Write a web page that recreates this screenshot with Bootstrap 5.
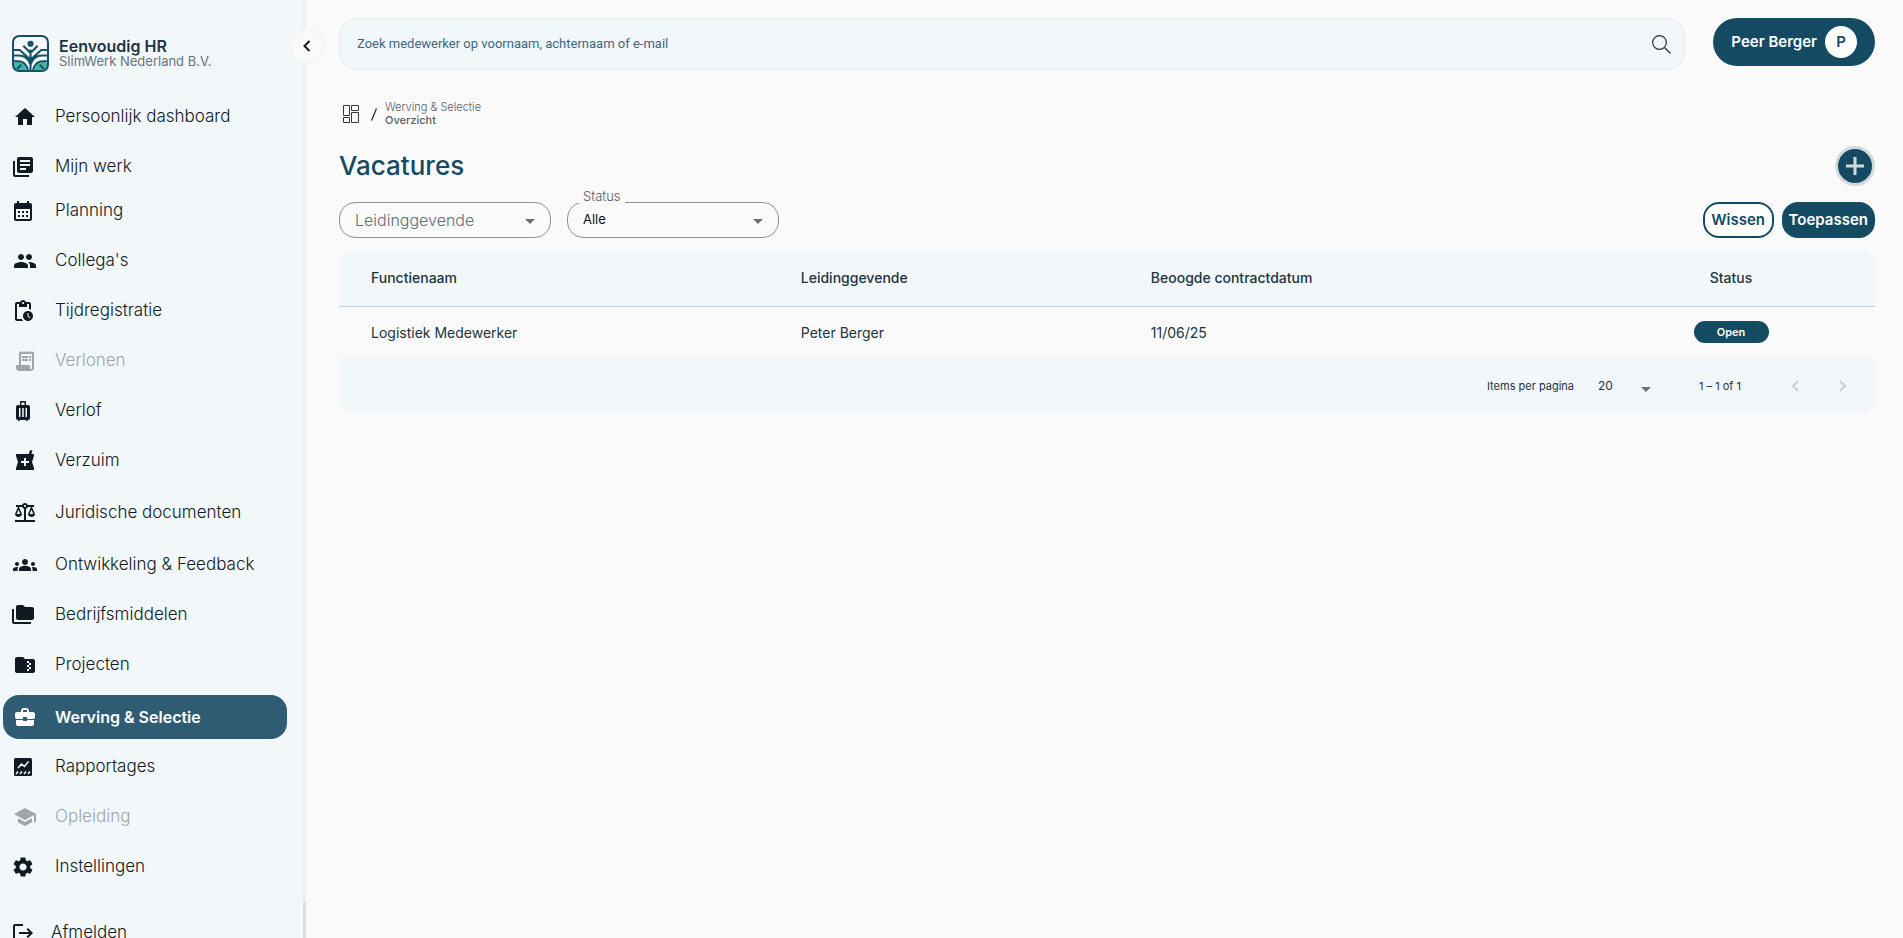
<!DOCTYPE html>
<html lang="nl">
<head>
<meta charset="utf-8">
<meta name="viewport" content="width=device-width, initial-scale=1">
<title>Vacatures – Eenvoudig HR</title>
<link href="https://cdn.jsdelivr.net/npm/bootstrap@5.3.0/dist/css/bootstrap.min.css" rel="stylesheet">
<style>
:root { --brand: #144b63; --soft: #f2f7fa; --ink: #16212a; }
body { background: #fafafa; color: var(--ink); font-family: Inter, sans-serif; }
a { color: inherit; text-decoration: none; }

/* sidebar */
.app-side { width: 306px; background: var(--soft); }
.side-body { height: 100vh; overflow: hidden; }
.side-track { width: 3px; background: #eceef0; }
.side-thumb { height: 36px; background: #d8dfe4; }
.side-head { height: 95px; padding: 35px 12px 0; gap: 10px; }
.side-head svg { width: 37px; height: 37px; }
.side-names { padding-top: 3px; }
.side-title { font-size: 16px; font-weight: 600; line-height: 16px; color: #22333f; }
.side-org { font-size: 13px; font-weight: 400; line-height: 14px; color: #69737b; }
.side-toggle { left: 290px; top: 29px; width: 34px; height: 34px; background: #fafafa; border: 1px solid #edf0f2; z-index: 2; }
.side-link { height: 44px; margin: 0 16px 6px 3px; padding-left: 8px; border-radius: 16px; font-size: 17px; font-weight: 350; color: #101a22; }
.side-link.tight { margin-bottom: 0; }
.side-link.wide { margin-bottom: 8px; }
.side-link.active { background: #2f5c73; color: #fff; font-size: 16px; font-weight: 600; }
.side-link.disabled { color: #9fa5aa; }
.side-link svg { display: block; width: 24px; height: 24px; fill: currentColor; }
.side-icon { width: 44px; }
.side-icon.inset { padding-left: 2px; }
.side-link.logout { margin-top: 22px; }
.side-link.logout .side-icon { width: 40px; }

/* top bar */
.app-main { padding: 18px 28px 0 33px; }
.search-box { height: 52px; background: var(--soft); border: 2px solid #edf1f5; border-radius: 17px; padding: 0 12px 0 16px; }
.search-box input { font: 13px Roboto, sans-serif; line-height: 16px; color: #3d6880; }
.search-box input::placeholder { color: #3d6880; opacity: 1; }
.user-btn { height: 48px; margin-left: 28px; padding: 0 17px; gap: 8px; border-radius: 24px; background: var(--brand); color: #fff; font-size: 15px; font-weight: 600; }
.user-initial { width: 32px; height: 32px; background: #fff; color: var(--brand); }

/* page heading */
.crumbs { margin-top: 31px; gap: 8px; padding-left: 4px; line-height: 13px; font-size: 11px; color: #5b6064; font-weight: 300; }
.page-head { margin: 19px 0 16px; }
.page-title { font-size: 26px; font-weight: 500; line-height: 32px; color: var(--brand); }
.add-btn { width: 40px; height: 40px; background: var(--brand); border: 3px solid #d5d9dc; color: #d5d9dc; }

/* filters */
.filter-box { width: 212px; height: 36px; }
.filter-box select { appearance: none; height: 36px; padding: 0 15px; border: 1px solid #8f9293; border-radius: 16px; background: transparent; font-size: 13px; color: #111; }
.filter-box select.empty { font-size: 16px; font-weight: 300; color: #666b6f; }
.filter-label { left: 12px; top: -14px; padding: 0 4px; background: #fafafa; font-size: 13px; line-height: 16px; font-weight: 350; color: #555b60; }
.caret { width: 0; height: 0; border: 5px solid transparent; border-top-color: #6d7072; border-bottom: 0; }
.filter-box .caret { right: 16px; top: 17px; pointer-events: none; }
.pill-btn { min-width: 71px; height: 36px; border: 2px solid var(--brand); border-radius: 16px; padding: 0 5px; font-size: 15px; font-weight: 600; line-height: 16px; background: #fff; color: var(--brand); }
.pill-btn.solid { background: var(--brand); color: #fff; }

/* table */
.data-card { margin-top: 12px; border-radius: 16px; background: var(--soft); overflow: hidden; }
.data-grid { table-layout: fixed; font-size: 14px; color: #22333f; }
.data-grid th { height: 56px; font-weight: 500; border-bottom: 1px solid #c3cdd6; }
.data-grid td { height: 52px; font-weight: 400; background: #fafafa; }
.data-grid .first { width: 30%; padding-left: 32px; }
.data-grid .second { width: 350px; }
.data-grid .fourth { width: 288px; }
.state-pill { width: 75px; height: 22px; border-radius: 11px; background: var(--brand); color: #fff; font-size: 11px; font-weight: 600; }
.pager { height: 56px; padding-right: 20px; font-size: 11px; color: #22333f; }
.page-size { width: 53px; margin-right: 48px; }
.page-size select { appearance: none; border: 0; background: transparent; font-size: 12px; color: #22333f; }
.page-size .caret { right: 0; top: 10px; pointer-events: none; }
.page-range { margin-right: 42px; }
.pager button { width: 24px; height: 24px; }
</style>
</head>
<body>
<div class="d-flex min-vh-100">
  <aside class="app-side d-flex flex-shrink-0 position-relative">
    <div class="side-body flex-grow-1">
      <div class="side-head d-flex">
        <svg viewBox="0 0 36 36" aria-hidden="true">
          <rect x="1" y="1" width="34" height="34" rx="6" fill="#f5fafc"/>
          <path d="M2 27c6-2 11 1 12 7H6q-4 0-4-4zM34 27c-6-2-11 1-12 7h8q4 0 4-4z" fill="#3cb8a6"/>
          <g fill="none" stroke="#174f69" stroke-width="2">
            <path d="M2 14.500h5.500l10.500 9.500 10.500-9.500H34M2 20h4.500c6 0 10 4 11.500 9 1.500-5 5.500-9 11.500-9H34M2 25.500h4c5 0 8 3 9.500 8.500M34 25.500h-4c-5 0-8 3-9.500 8.500M18 14v20M11 10.500l7 7 7-7M5 33l4-4M31 33l-4-4"/>
            <rect x="1" y="1" width="34" height="34" rx="6"/>
          </g>
          <circle cx="18" cy="8.500" r="3" fill="#174f69"/>
        </svg>
        <div class="side-names">
          <div class="side-title">Eenvoudig HR</div>
          <div class="side-org">SlimWerk Nederland B.V.</div>
        </div>
      </div>
      <nav>
        <a href="#" class="side-link d-flex align-items-center"><span class="side-icon inset"><svg viewBox="0 0 24 24"><path d="M10 20v-6h4v6h5v-8h3L12 3 2 12h3v8z"/></svg></span>Persoonlijk dashboard</a>
        <a href="#" class="side-link tight d-flex align-items-center"><span class="side-icon"><svg viewBox="0 0 24 24"><path d="M4 6H2v14c0 1.100.9 2 2 2h14v-2H4V6zm16-4H8c-1.100 0-2 .9-2 2v12c0 1.100.9 2 2 2h12c1.100 0 2-.9 2-2V4c0-1.100-.9-2-2-2zm-1 9H9V9h10v2zm-4 4H9v-2h6v2zm4-8H9V5h10v2z"/></svg></span>Mijn werk</a>
        <a href="#" class="side-link d-flex align-items-center"><span class="side-icon"><svg viewBox="0 0 24 24"><path d="M19 4h-1V2h-2v2H8V2H6v2H5c-1.110 0-1.990.9-1.990 2L3 20c0 1.100.89 2 2 2h14c1.100 0 2-.9 2-2V6c0-1.100-.9-2-2-2zm0 16H5V10h14v10zM9 14H7v-2h2v2zm4 0h-2v-2h2v2zm4 0h-2v-2h2v2zm-8 4H7v-2h2v2zm4 0h-2v-2h2v2zm4 0h-2v-2h2v2z"/></svg></span>Planning</a>
        <a href="#" class="side-link d-flex align-items-center"><span class="side-icon inset"><svg viewBox="0 0 24 24"><path d="M16 11c1.660 0 2.990-1.340 2.990-3S17.660 5 16 5c-1.660 0-3 1.340-3 3s1.340 3 3 3zm-8 0c1.660 0 2.990-1.340 2.990-3S9.660 5 8 5C6.340 5 5 6.340 5 8s1.340 3 3 3zm0 2c-2.330 0-7 1.170-7 3.500V19h14v-2.500c0-2.330-4.670-3.500-7-3.500zm8 0c-.29 0-.62.020-.97.050 1.160.84 1.970 1.970 1.970 3.450V19h6v-2.500c0-2.330-4.670-3.500-7-3.500z"/></svg></span>Collega's</a>
        <a href="#" class="side-link d-flex align-items-center"><span class="side-icon"><svg viewBox="0 0 24 24"><path d="M17 12c-2.760 0-5 2.240-5 5s2.240 5 5 5 5-2.240 5-5-2.240-5-5-5zm1.650 7.350L16.500 17.200V14h1v2.790l1.850 1.850-.7.71zM18 3h-3.180C14.400 1.840 13.300 1 12 1s-2.400.84-2.820 2H6c-1.100 0-2 .9-2 2v15c0 1.100.9 2 2 2h6.110c-.59-.57-1.070-1.250-1.420-2H6V5h2v3h8V5h2v5.080c.71.1 1.380.31 2 .6V5c0-1.100-.9-2-2-2zm-6 2c-.55 0-1-.45-1-1s.45-1 1-1 1 .45 1 1-.45 1-1 1z"/></svg></span>Tijdregistratie</a>
        <a class="side-link disabled d-flex align-items-center" aria-disabled="true"><span class="side-icon inset"><svg viewBox="0 0 24 24"><path d="M19.500 3.500L18 2l-1.500 1.500L15 2l-1.500 1.500L12 2l-1.500 1.500L9 2 7.500 3.500 6 2v14H3v3c0 1.660 1.340 3 3 3h12c1.660 0 3-1.340 3-3V2l-1.500 1.500zM19 19c0 .55-.45 1-1 1s-1-.45-1-1v-3H8V5h11v14zM9 7h6v2H9zM16 7h2v2h-2zM9 10h6v2H9zM16 10h2v2h-2z"/></svg></span>Verlonen</a>
        <a href="#" class="side-link d-flex align-items-center"><span class="side-icon"><svg viewBox="0 0 24 24"><path d="M17 6h-2V3c0-.55-.45-1-1-1h-4c-.55 0-1 .45-1 1v3H7c-1.100 0-2 .9-2 2v11c0 1.100.9 2 2 2 0 .55.45 1 1 1s1-.45 1-1h6c0 .55.45 1 1 1s1-.45 1-1c1.100 0 2-.9 2-2V8c0-1.100-.9-2-2-2zM9.500 18H8V9h1.500v9zm3.250 0h-1.500V9h1.500v9zm.75-12h-3V3.500h3V6zM16 18h-1.500V9H16v9z"/></svg></span>Verlof</a>
        <a href="#" class="side-link wide d-flex align-items-center"><span class="side-icon inset"><svg viewBox="0 0 24 24"><path d="M21 5h-2.640l1.140-3.140L17.150 1l-1.460 4H3v2l2 6-2 6v2h18v-2l-2-6 2-6V5zm-5 9h-3v3h-2v-3H8v-2h3V9h2v3h3v2z"/></svg></span>Verzuim</a>
        <a href="#" class="side-link wide d-flex align-items-center"><span class="side-icon inset"><svg viewBox="0 0 24 24"><path d="M13 7.830c.85-.3 1.530-.98 1.830-1.830H18l-3 7c0 1.660 1.570 3 3.500 3s3.500-1.340 3.500-3l-3-7h2V4h-6.170c-.41-1.170-1.520-2-2.830-2s-2.420.83-2.830 2H3v2h2l-3 7c0 1.660 1.570 3 3.500 3S9 14.660 9 13L6 6h3.170c.3.85.98 1.530 1.830 1.830V19H2v2h20v-2h-9V7.830zM20.370 13h-3.740l1.870-4.360L20.370 13zm-13 0H3.630L5.500 8.640 7.370 13zM12 6c-.55 0-1-.45-1-1s.45-1 1-1 1 .45 1 1-.45 1-1 1z"/></svg></span>Juridische documenten</a>
        <a href="#" class="side-link d-flex align-items-center"><span class="side-icon inset"><svg viewBox="0 0 24 24"><path d="M12 12.750c1.630 0 3.070.39 4.240.9 1.080.48 1.760 1.560 1.760 2.730V18H6v-1.610c0-1.180.68-2.260 1.760-2.730 1.170-.52 2.610-.91 4.240-.91zM4 13c1.100 0 2-.9 2-2s-.9-2-2-2-2 .9-2 2 .9 2 2 2zm1.130 1.100c-.37-.06-.74-.1-1.130-.1-.99 0-1.930.21-2.780.58C.48 14.900 0 15.620 0 16.430V18h4.500v-1.610c0-.83.23-1.610.63-2.290zM20 13c1.100 0 2-.9 2-2s-.9-2-2-2-2 .9-2 2 .9 2 2 2zm4 3.430c0-.81-.48-1.530-1.220-1.850-.85-.37-1.790-.58-2.780-.58-.39 0-.76.040-1.130.1.4.68.63 1.460.63 2.290V18H24v-1.570zM12 6c1.660 0 3 1.340 3 3s-1.340 3-3 3-3-1.340-3-3 1.340-3 3-3z"/></svg></span>Ontwikkeling &amp; Feedback</a>
        <a href="#" class="side-link d-flex align-items-center"><span class="side-icon"><svg viewBox="0 0 24 24"><path d="M3 6H1v13c0 1.100.9 2 2 2h17v-2H3V6zM21 4h-7l-2-2H7c-1.100 0-1.990.9-1.990 2L5 15c0 1.100.9 2 2 2h14c1.100 0 2-.9 2-2V6c0-1.100-.9-2-2-2z"/></svg></span>Bedrijfsmiddelen</a>
        <a href="#" class="side-link wide d-flex align-items-center"><span class="side-icon inset"><svg viewBox="0 0 24 24"><path d="M20 6h-8l-2-2H4c-1.100 0-1.990.9-1.990 2L2 18c0 1.100.9 2 2 2h16c1.100 0 2-.9 2-2V8c0-1.100-.9-2-2-2zm-2 6h-2v2h2v2h-2v2h-2v-2h2v-2h-2v-2h2v-2h-2V8h2v2h2v2z"/></svg></span>Projecten</a>
        <a href="#" class="side-link active d-flex align-items-center" aria-current="page"><span class="side-icon inset"><svg viewBox="0 0 24 24"><path d="M10 16v-1H3.010L3 19c0 1.110.89 2 2 2h14c1.110 0 2-.89 2-2v-4h-7v1h-4zm10-9h-4.010V5l-2-2h-4l-2 2v2H4c-1.100 0-2 .9-2 2v3c0 1.110.89 2 2 2h6v-2h4v2h6c1.100 0 2-.9 2-2V9c0-1.100-.9-2-2-2zm-6 0h-4V5h4v2z"/></svg></span>Werving &amp; Selectie</a>
        <a href="#" class="side-link d-flex align-items-center"><span class="side-icon"><svg viewBox="0 0 24 24"><rect x="3" y="3" width="18" height="18" rx="1.500"/><path d="M7 13l3.500-4 3 2.500 4-5M5 19l2-2.500M9 19l2-2.500M13 19l2-2.500M17 19l2-2.500" fill="none" stroke="#f2f7fa" stroke-width="1.500"/></svg></span>Rapportages</a>
        <a class="side-link disabled d-flex align-items-center" aria-disabled="true"><span class="side-icon inset"><svg viewBox="0 0 24 24"><path d="M5 13.180v4L12 21l7-3.820v-4L12 17l-7-3.820zM12 3L1 9l11 6 9-4.910V17h2V9L12 3z"/></svg></span>Opleiding</a>
        <a href="#" class="side-link d-flex align-items-center"><span class="side-icon"><svg viewBox="0 0 24 24"><path d="M19.140 12.940c.040-.3.060-.61.060-.94 0-.32-.02-.64-.07-.94l2.030-1.580c.18-.14.230-.41.120-.61l-1.920-3.320c-.12-.22-.37-.29-.59-.22l-2.390.96c-.5-.38-1.030-.7-1.620-.94l-.36-2.540c-.04-.24-.24-.41-.48-.41h-3.840c-.24 0-.43.17-.47.41l-.36 2.540c-.59.24-1.130.57-1.620.94l-2.390-.96c-.22-.08-.47 0-.59.22L2.740 8.870c-.12.21-.08.47.12.61l2.030 1.580c-.05.3-.09.63-.09.94s.020.64.070.94l-2.030 1.580c-.18.14-.23.41-.12.61l1.920 3.320c.12.22.37.29.59.22l2.390-.96c.5.38 1.030.7 1.620.94l.36 2.540c.050.24.240.41.480.41h3.840c.24 0 .44-.17.470-.41l.36-2.540c.59-.24 1.130-.56 1.620-.94l2.390.96c.22.080.47 0 .59-.22l1.920-3.320c.12-.22.070-.47-.12-.61l-2.010-1.580zM12 15.600c-1.980 0-3.600-1.620-3.600-3.600s1.620-3.600 3.600-3.600 3.600 1.620 3.600 3.600-1.620 3.600-3.600 3.600z"/></svg></span>Instellingen</a>
        <a href="#" class="side-link logout d-flex align-items-center"><span class="side-icon"><svg viewBox="0 0 24 24"><path d="M17 7l-1.410 1.410L18.170 11H8v2h10.170l-2.580 2.580L17 17l5-5zM4 5h8V3H4c-1.100 0-2 .9-2 2v14c0 1.100.9 2 2 2h8v-2H4V5z"/></svg></span>Afmelden</a>
      </nav>
    </div>
    <div class="side-track d-flex flex-column justify-content-end"><div class="side-thumb"></div></div>
    <button type="button" class="side-toggle btn rounded-circle p-0 position-absolute d-flex align-items-center justify-content-center" aria-label="Menu inklappen">
      <svg width="12" height="14" viewBox="0 0 12 14" fill="none" stroke="#101a22" stroke-width="2"><path d="M8.500 2L3.500 7l5 5"/></svg>
    </button>
  </aside>

  <main class="app-main flex-grow-1">
    <header class="d-flex align-items-start">
      <form class="search-box d-flex align-items-center flex-grow-1">
        <input type="search" class="form-control border-0 bg-transparent p-0 shadow-none" aria-label="Zoeken" placeholder="Zoek medewerker op voornaam, achternaam of e-mail">
        <button type="submit" class="btn p-0 border-0 d-flex" aria-label="Zoek">
          <svg width="19" height="19" viewBox="0 0 19 19" fill="none" stroke="#22333f" stroke-width="1.200"><circle cx="7.500" cy="7.500" r="6.800"/><path d="M12.500 12.500l6 6"/></svg>
        </button>
      </form>
      <button type="button" class="user-btn btn d-flex align-items-center flex-shrink-0">Peer Berger<span class="user-initial rounded-circle d-flex align-items-center justify-content-center">P</span></button>
    </header>

    <nav class="crumbs d-flex align-items-center" aria-label="Kruimelpad">
      <a href="#" aria-label="Dashboard" class="d-flex"><svg width="16" height="18" viewBox="0 0 16 18" fill="none" stroke="#33393e"><path d="M.5.5h6v10h-6zM8.500.5h7v5h-7zM.5 12.500h6v5h-6zM8.500 7.500h7v10h-7z"/></svg></a>
      <svg class="ms-1" width="6" height="13" viewBox="0 0 6 13" stroke="#16212a" stroke-width="1.200" aria-hidden="true"><path d="M.5 12.500l5-12"/></svg>
      <div><a href="#" class="d-block">Werving &amp; Selectie</a><span class="fw-medium d-block" aria-current="page">Overzicht</span></div>
    </nav>

    <div class="page-head d-flex align-items-center justify-content-between">
      <h1 class="page-title mb-0">Vacatures</h1>
      <button type="button" class="add-btn btn rounded-circle p-0 d-flex align-items-center justify-content-center" aria-label="Vacature toevoegen">
        <svg width="18" height="18" viewBox="0 0 18 18" stroke="currentColor" stroke-width="3"><path d="M9 0v18M0 9h18"/></svg>
      </button>
    </div>

    <div class="d-flex align-items-center">
      <div class="filter-box position-relative me-3">
        <select class="empty w-100" aria-label="Leidinggevende"><option>Leidinggevende</option></select>
        <span class="caret position-absolute"></span>
      </div>
      <div class="filter-box position-relative">
        <label for="state" class="filter-label position-absolute">Status</label>
        <select id="state" class="w-100"><option>Alle</option></select>
        <span class="caret position-absolute"></span>
      </div>
      <div class="d-flex gap-2 ms-auto">
        <button type="button" class="pill-btn btn">Wissen</button>
        <button type="button" class="pill-btn solid btn">Toepassen</button>
      </div>
    </div>

    <section class="data-card">
      <table class="data-grid w-100">
        <thead><tr><th class="first">Functienaam</th><th class="second">Leidinggevende</th><th>Beoogde contractdatum</th><th class="fourth text-center">Status</th></tr></thead>
        <tbody><tr><td class="first">Logistiek Medewerker</td><td>Peter Berger</td><td>11/06/25</td><td><span class="state-pill d-flex align-items-center justify-content-center mx-auto">Open</span></td></tr></tbody>
      </table>
      <div class="pager d-flex align-items-center justify-content-end">
        <label for="size">Items per pagina</label>
        <div class="page-size position-relative ms-4">
          <select id="size" class="w-100 p-0"><option>20</option></select>
          <span class="caret position-absolute"></span>
        </div>
        <span class="page-range">1 – 1 of 1</span>
        <button type="button" class="btn p-0 border-0 d-flex align-items-center justify-content-center me-4" disabled aria-label="Vorige pagina"><svg width="8" height="12" viewBox="0 0 8 12" fill="none" stroke="#b5bbbf" stroke-width="2"><path d="M7 1L2 6l5 5"/></svg></button>
        <button type="button" class="btn p-0 border-0 d-flex align-items-center justify-content-center" disabled aria-label="Volgende pagina"><svg width="8" height="12" viewBox="0 0 8 12" fill="none" stroke="#b5bbbf" stroke-width="2"><path d="M1 1l5 5-5 5"/></svg></button>
      </div>
    </section>
  </main>
</div>
<script src="https://cdn.jsdelivr.net/npm/bootstrap@5.3.0/dist/js/bootstrap.bundle.min.js"></script>
</body>
</html>
